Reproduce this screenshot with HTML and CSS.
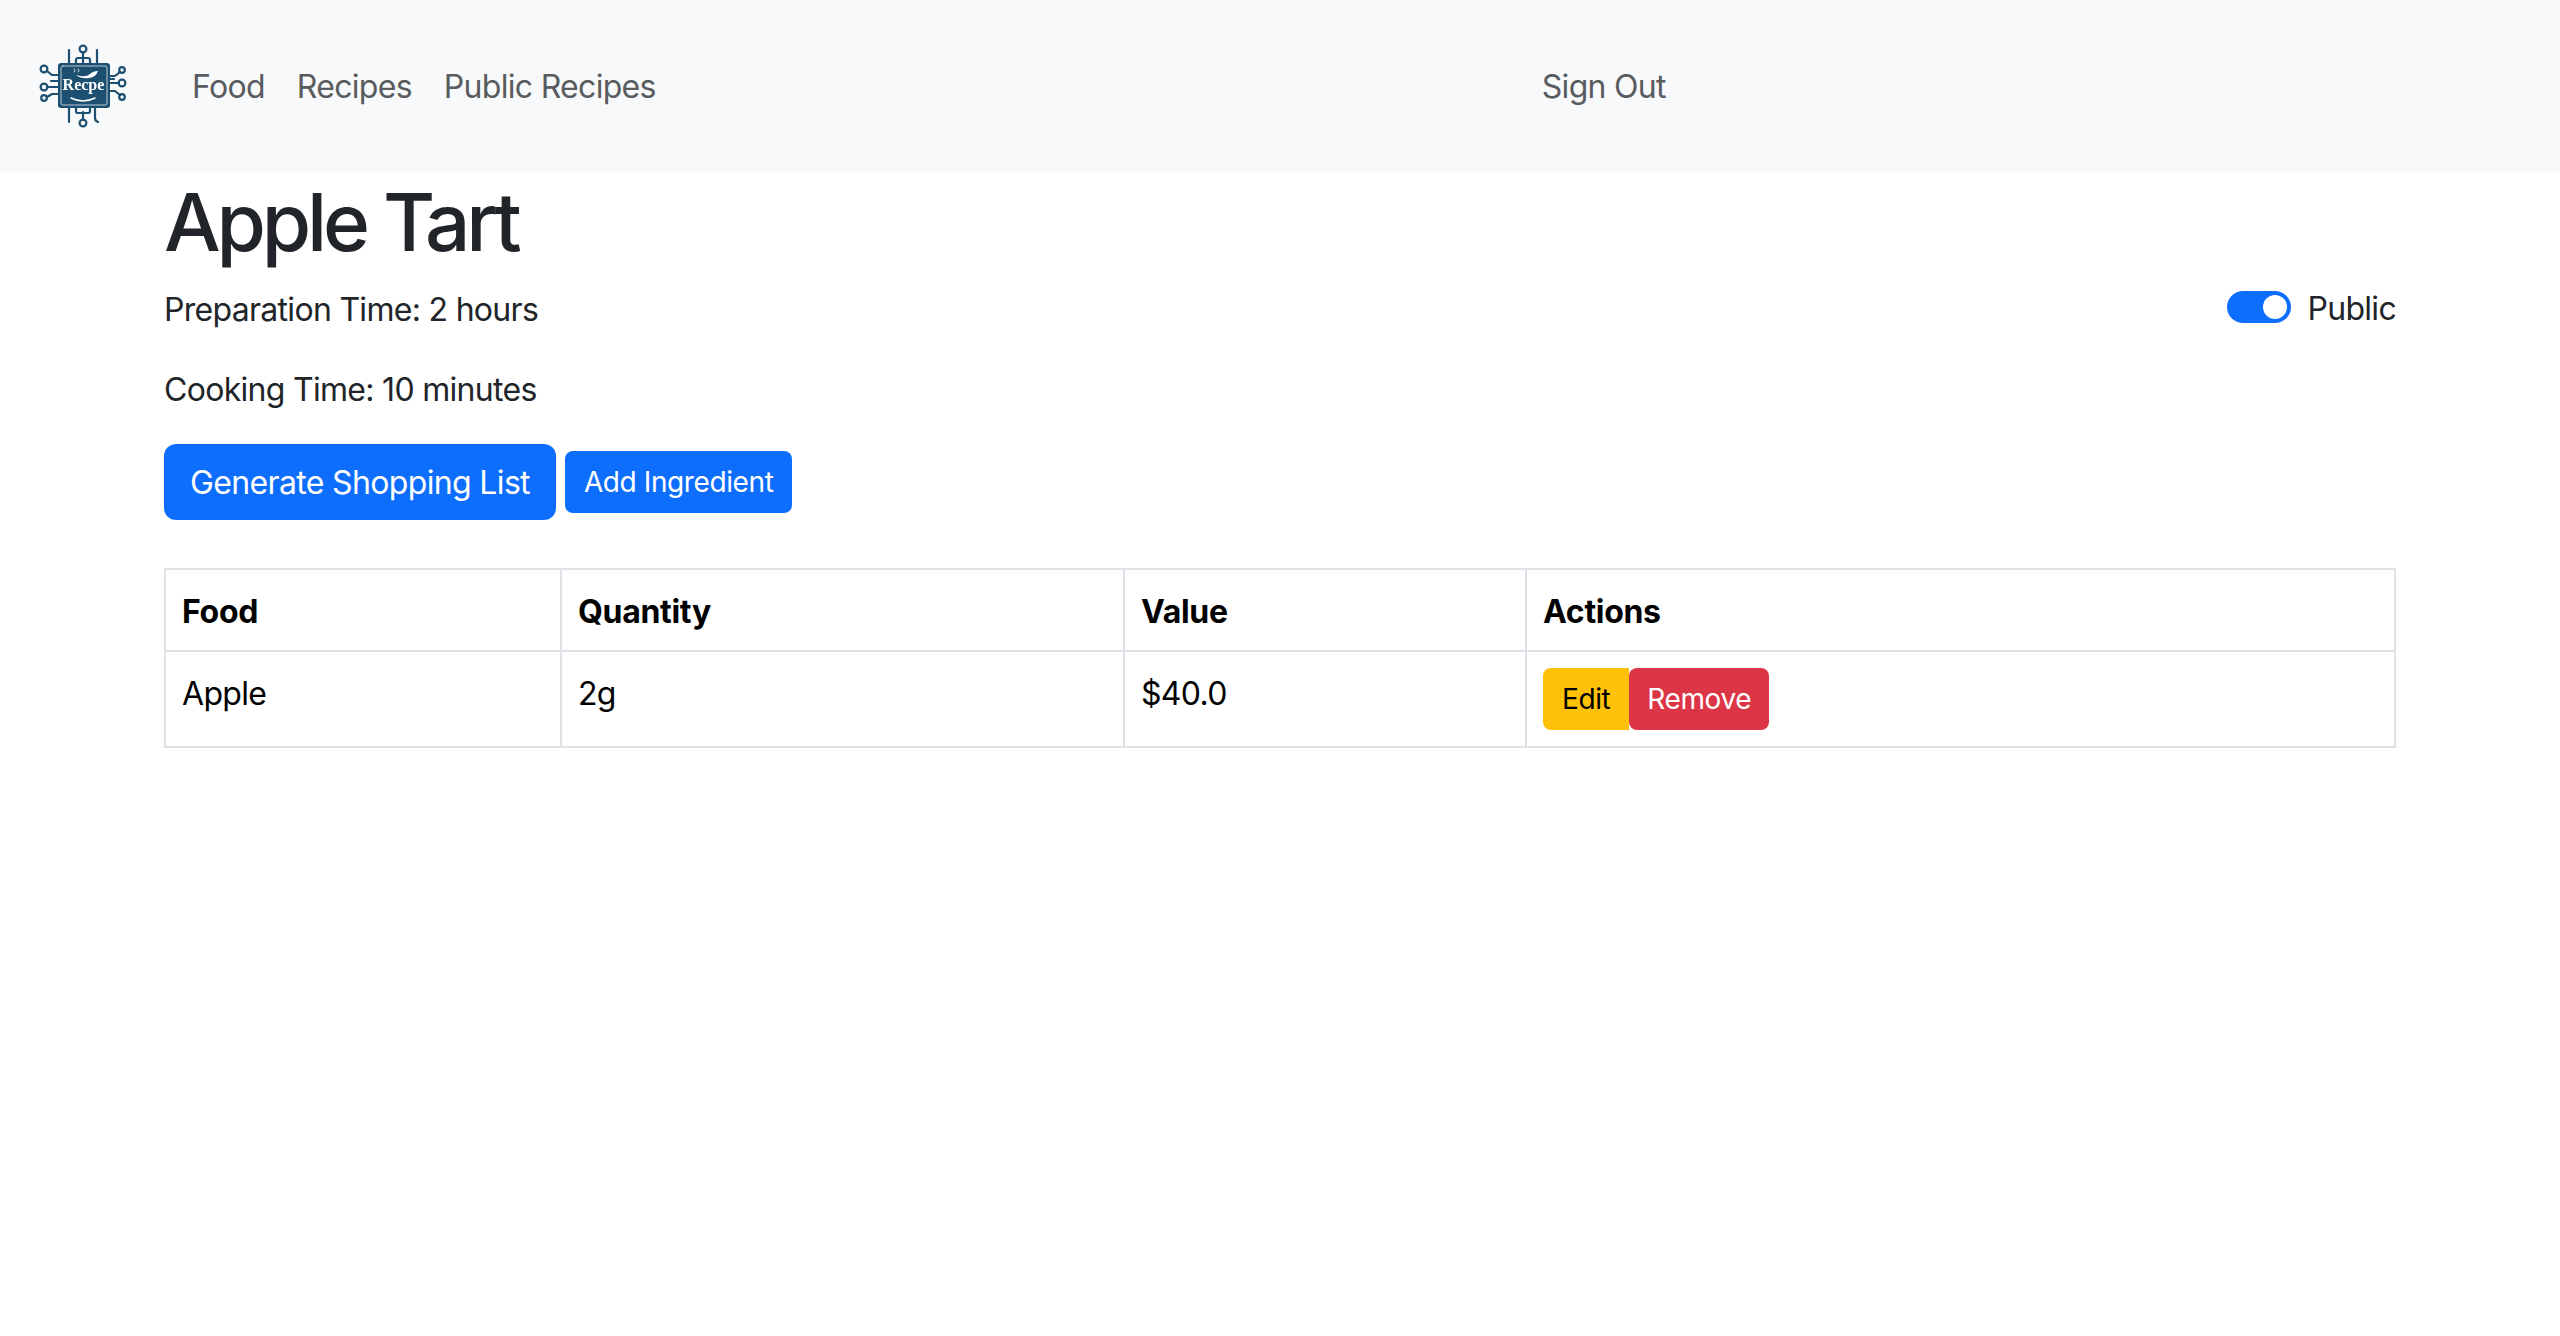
FILE: index.html
```html
<!DOCTYPE html>
<html>
  <head>
    <title>Apple Tart</title>
    <meta charset="UTF-8">
    <meta name="viewport" content="width=device-width, initial-scale=1.0">
    <link rel="stylesheet" href="styles.css">
  </head>
  <body>
    <nav class="navbar">
      <a class="brand" href="#">
        <svg class="logo" viewBox="0 0 90 84" fill="none" stroke="#1d4f70" stroke-width="2.2" stroke-linecap="round">
          <!-- top pins -->
          <circle cx="45" cy="5" r="3.4"/>
          <path d="M45 8v6M38 20v-4q0-2 2-2h10q2 0 2 2v4M45 14v6"/>
          <path d="M31 6v14M59 6v14"/>
          <!-- bottom pins -->
          <circle cx="45" cy="79" r="3.4"/>
          <path d="M45 76v-8M38 63v4q0 2 2 2h10q2 0 2-2v-4"/>
          <path d="M31 63v15M57 63v11q0 3 3 4"/>
          <!-- left pins -->
          <circle cx="6" cy="25" r="3.4"/>
          <circle cx="6" cy="43" r="3.4"/>
          <circle cx="6" cy="54" r="2.8"/>
          <path d="M9 27l5 4h6M9 43h11M9 53l5-3h6M13 37h7"/>
          <!-- right pins -->
          <circle cx="84" cy="26" r="2.8"/>
          <circle cx="84" cy="39" r="3.4"/>
          <circle cx="84" cy="53" r="2.8"/>
          <path d="M82 28l-5 4h-5M81 39h-9M82 51l-5-4h-5M72 35h4"/>
          <!-- chip body -->
          <rect x="20" y="19" width="52" height="45" rx="3" fill="#1d4f70" stroke="none"/>
          <rect x="23" y="22" width="46" height="39" rx="2" stroke="#b9cbd6" stroke-width="1"/>
          <path d="M38 31q10 3 14-1q3-3 8-3q-2 6-9 7q-8 1-13-3z" fill="#fff" stroke="none"/>
          <path d="M36 25l1 1.5-1 1.5M40 25l1 1.5-1 1.5" stroke="#fff" stroke-width="0.8"/>
          <path d="M33 54q12 6 24 0" stroke="#fff" stroke-width="1.5"/>
          <text class="logo-text" x="45.5" y="46" text-anchor="middle">Recpe</text>
        </svg>
      </a>
      <ul class="nav-links">
        <li><a href="#">Food</a></li>
        <li><a href="#">Recipes</a></li>
        <li><a href="#">Public Recipes</a></li>
      </ul>
      <a class="sign-out" href="#">Sign Out</a>
    </nav>

    <div class="container">
      <h1>Apple Tart</h1>
      <div class="info-row">
        <p>Preparation Time: 2 hours</p>
        <label class="switch-row">
          <span class="switch"><span class="knob"></span></span>
          <span class="switch-label">Public</span>
        </label>
      </div>
      <p>Cooking Time: 10 minutes</p>
      <div class="button-row">
        <button class="btn btn-blue btn-big">Generate Shopping List</button>
        <button class="btn btn-blue btn-add">Add Ingredient</button>
      </div>
      <table>
        <tr>
          <th class="col-food">Food</th>
          <th class="col-quantity">Quantity</th>
          <th class="col-value">Value</th>
          <th>Actions</th>
        </tr>
        <tr>
          <td>Apple</td>
          <td>2g</td>
          <td>$40.0</td>
          <td class="actions-cell">
            <div class="actions">
              <button class="btn btn-yellow">Edit</button>
              <button class="btn btn-red">Remove</button>
            </div>
          </td>
        </tr>
      </table>
    </div>
  </body>
</html>
```

FILE: styles.css
```css
*{
   box-sizing: border-box;
}

body{
   margin: 0;
   font-family: Inter, "Liberation Sans", sans-serif;
   font-size: 32px;
   line-height: 48px;
   letter-spacing: -0.7px;
   color: #212529;
   background: white;
}

a{
   text-decoration: none;
   color: inherit;
}

.navbar{
   display: flex;
   align-items: center;
   height: 172px;
   padding-left: 38px;
   background: #f8f9fa;
   color: #595c5f;
}

.logo{
   display: block;
   width: 90px;
   height: 84px;
   filter: blur(0.4px);
}

.logo-text{
   font-family: "Liberation Serif", serif;
   font-size: 16px;
   font-weight: bold;
   letter-spacing: 0;
   fill: white;
   stroke: none;
}

.nav-links{
   display: flex;
   gap: 32px;
   margin: 2px 0 0 64px;
   padding: 0;
   list-style: none;
}

.sign-out{
   margin: 2px 0 0 886px;
}

.container{
   padding: 0 164px;
}

h1{
   margin: 0 0 14px;
   padding-top: 2px;
   font-size: 80px;
   line-height: 96px;
   font-weight: 500;
   letter-spacing: -4.2px;
}

p{
   margin: 0 0 30px;
   padding-top: 2px;
}

.info-row{
   display: flex;
   justify-content: space-between;
}

.switch-row{
   display: flex;
   align-items: center;
   gap: 16px;
   height: 46px;
}

.switch-label{
   padding-top: 3px;
}

.switch{
   display: flex;
   justify-content: flex-end;
   align-items: center;
   width: 64px;
   height: 32px;
   padding-right: 4px;
   border-radius: 16px;
   background: #0d6efd;
}

.knob{
   width: 24px;
   height: 24px;
   border-radius: 50%;
   background: white;
}

.button-row{
   display: flex;
   align-items: center;
   gap: 9px;
   margin-bottom: 48px;
}

.btn{
   height: 62px;
   padding: 0 18px;
   border: 0;
   border-radius: 8px;
   font-family: inherit;
   font-size: 28px;
   letter-spacing: -0.4px;
}

.btn-big{
   height: 76px;
   padding: 0 26px;
   border-radius: 12px;
   font-size: 32px;
   letter-spacing: -0.65px;
}

.btn-add{
   padding: 0 19px;
}

.btn-blue{
   background: #0d6efd;
   color: white;
}

.btn-yellow{
   padding: 0 19px;
   background: #ffc107;
   color: black;
   border-radius: 8px 0 0 8px;
}

.btn-red{
   background: #dc3545;
   color: white;
}

table{
   width: 100%;
   border-collapse: collapse;
   table-layout: fixed;
   color: black;
}

th, td{
   padding: 18px 16px 14px;
   border: 2px solid #dee2e6;
   text-align: left;
   vertical-align: top;
}

th{
   height: 82px;
   letter-spacing: -0.3px;
}

td{
   height: 96px;
}

.actions-cell{
   padding-top: 16px;
}

.actions{
   display: flex;
}

.col-food{
   width: 396px;
}

.col-quantity{
   width: 563px;
}

.col-value{
   width: 402px;
}
```
